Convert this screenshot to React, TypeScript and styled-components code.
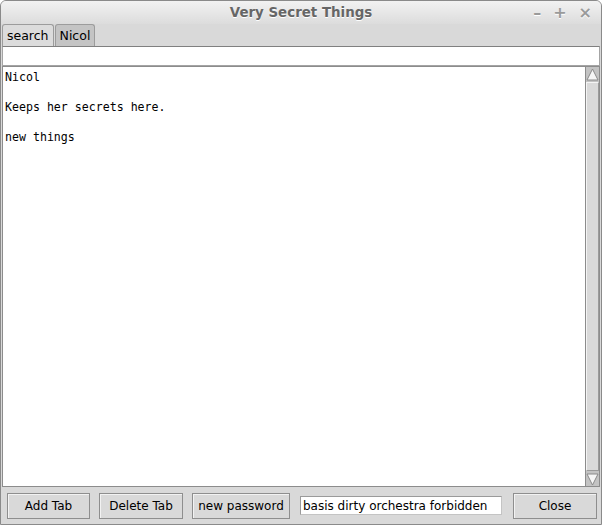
import React, { useState } from "react";
import styled, { createGlobalStyle } from "styled-components";

const GlobalStyle = createGlobalStyle`
  html, body {
    margin: 0;
    padding: 0;
    background: #ffffff;
  }
  * {
    box-sizing: border-box;
  }
`;

const Window = styled.div`
  width: 602px;
  height: 525px;
  display: flex;
  flex-direction: column;
  background: #d9d9d9;
  border: 1px solid #8a8a8a;
  border-radius: 6px 6px 0 0;
  overflow: hidden;
  font-family: "DejaVu Sans", "Liberation Sans", sans-serif;
  font-size: 12px;
  color: #000;
`;

const TitleBar = styled.div`
  position: relative;
  height: 23px;
  flex: none;
  display: flex;
  align-items: center;
  justify-content: center;
  background: linear-gradient(#f2f2f2, #dcdcdc);
`;

const Title = styled.span`
  font-weight: bold;
  font-size: 13.4px;
  color: #666;
  text-shadow: 0 1px 0 #fff;
`;

const Controls = styled.div`
  position: absolute;
  right: 9px;
  top: 2px;
  display: flex;
  gap: 12px;
  font-size: 16px;
  font-weight: bold;
  color: #9a9a9a;
  text-shadow: 0 1px 0 #fff;
`;

const TabStrip = styled.div`
  height: 22px;
  flex: none;
  display: flex;
  align-items: flex-end;
  gap: 1px;
  padding-left: 1px;
`;

const Tab = styled.div<{ $active?: boolean }>`
  height: 22px;
  padding: 0 4px;
  display: flex;
  align-items: center;
  font-size: 12.5px;
  background: ${({ $active }) => ($active ? "#dcdcdc" : "#c4c4c4")};
  border: 1px solid #9c9c9c;
  border-bottom: none;
  border-radius: 3px 3px 0 0;
`;

const EntryLine = styled.input`
  height: 20px;
  flex: none;
  margin: 0 1px;
  border: 1px solid #a4a4a4;
  border-top-color: #808080;
  background: #fff;
  outline: none;
  padding: 0 2px;
  font-family: "DejaVu Sans", sans-serif;
  font-size: 12px;
`;

const Body = styled.div`
  flex: 1;
  display: flex;
  margin: 0 1px;
  min-height: 0;
`;

const TextPane = styled.div`
  flex: 1;
  background: #fff;
  border: 1px solid #8c8c8c;
  padding: 3px 2px;
  font-family: "DejaVu Sans Mono", "Liberation Mono", monospace;
  font-size: 11.6px;
  line-height: 15px;
  white-space: pre;
`;

const Scrollbar = styled.div`
  width: 14px;
  flex: none;
  display: flex;
  flex-direction: column;
  background: #c3c3c3;
  border: 1px solid #8c8c8c;
  border-left: none;
`;

const Arrow = styled.div`
  height: 14px;
  flex: none;
  display: flex;
  align-items: center;
  justify-content: center;
`;

const Thumb = styled.div`
  flex: 1;
  margin: 1px 0;
  background: #d9d9d9;
  border: 1px solid #9a9a9a;
  border-top-color: #f4f4f4;
  border-left-color: #f4f4f4;
`;

const BottomBar = styled.div`
  height: 37px;
  flex: none;
  display: flex;
  align-items: center;
  padding: 0 0 0 6px;
`;

const Button = styled.button<{ $w: number; $gap: number }>`
  width: ${({ $w }) => $w}px;
  height: 26px;
  margin-right: ${({ $gap }) => $gap}px;
  background: #d9d9d9;
  border: 1px solid #8e8e8e;
  box-shadow: inset 1px 1px 0 #f2f2f2;
  font-family: "DejaVu Sans", sans-serif;
  font-size: 12px;
  color: #000;
  padding: 0;
`;

const PassField = styled.input`
  width: 202px;
  height: 19px;
  margin-right: 11px;
  border: 1px solid #c4c4c4;
  border-top-color: #9a9a9a;
  border-left-color: #9a9a9a;
  background: #fff;
  padding: 0 2px;
  font-family: "DejaVu Sans", sans-serif;
  font-size: 12px;
  outline: none;
`;

const ArrowIcon = ({ up }: { up: boolean }) => (
  <svg width="13" height="13" viewBox="0 0 13 13">
    <polygon
      points={up ? "6.5,1 12,12 1,12" : "1,1 12,1 6.5,12"}
      fill="#f6f6f6"
      stroke="#8a8a8a"
      strokeWidth="1"
    />
  </svg>
);

const App: React.FC = () => {
  const [search, setSearch] = useState("");
  const [password, setPassword] = useState("basis dirty orchestra forbidden");

  return (
    <>
      <GlobalStyle />
      <Window>
        <TitleBar>
          <Title>Very Secret Things</Title>
          <Controls>
            <span>–</span>
            <span>+</span>
            <span>×</span>
          </Controls>
        </TitleBar>
        <TabStrip>
          <Tab $active>search</Tab>
          <Tab>Nicol</Tab>
        </TabStrip>
        <EntryLine value={search} onChange={(e) => setSearch(e.target.value)} autoFocus />
        <Body>
          <TextPane>{"Nicol\n\nKeeps her secrets here.\n\nnew things"}</TextPane>
          <Scrollbar>
            <Arrow>
              <ArrowIcon up />
            </Arrow>
            <Thumb />
            <Arrow>
              <ArrowIcon up={false} />
            </Arrow>
          </Scrollbar>
        </Body>
        <BottomBar>
          <Button $w={83} $gap={9}>Add Tab</Button>
          <Button $w={84} $gap={9}>Delete Tab</Button>
          <Button $w={98} $gap={10}>new password</Button>
          <PassField value={password} onChange={(e) => setPassword(e.target.value)} />
          <Button $w={84} $gap={0}>Close</Button>
        </BottomBar>
      </Window>
    </>
  );
};

export default App;
